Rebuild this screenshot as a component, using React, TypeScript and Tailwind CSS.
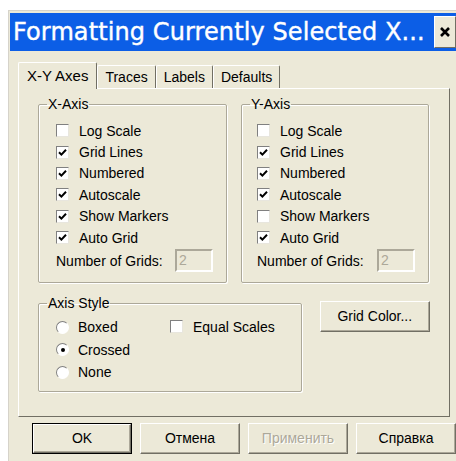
import { ReactNode } from 'react'

const font = { fontFamily: '"Liberation Sans", Arial, sans-serif' }

const CheckBox = ({ checked, label }: { checked?: boolean; label: string }) => (
  <div className="flex h-[21.4px] items-center">
    <span className="flex h-[13px] w-[13px] items-center justify-center border border-t-[#808080] border-l-[#808080] border-b-[#e8e6de] border-r-[#e8e6de] bg-white">
      {checked && (
        <svg width="9" height="9" viewBox="0 0 9 9">
          <path d="M1 4.2 L3.4 6.6 L8 1.8" fill="none" stroke="#000" strokeWidth="2" />
        </svg>
      )}
    </span>
    <span className="ml-[10px] text-[14px] leading-none text-black">{label}</span>
  </div>
)

const Radio = ({ checked, label }: { checked?: boolean; label: string }) => (
  <div className="flex h-[22.5px] items-center">
    <span className="flex h-[13px] w-[13px] items-center justify-center rounded-full border border-t-[#808080] border-l-[#808080] border-b-white border-r-white bg-white">
      {checked && <span className="h-[4px] w-[4px] rounded-full bg-black" />}
    </span>
    <span className="ml-[9px] text-[14px] leading-none text-black">{label}</span>
  </div>
)

const Group = ({ title, className, children }: { title: string; className: string; children: ReactNode }) => (
  <fieldset className={`rounded-[2px] border border-[#aca899] shadow-[inset_1px_1px_0_white,1px_1px_0_white] ${className}`}>
    <legend className="ml-[8px] px-[1px] text-[14px] leading-[16px] text-black">{title}</legend>
    {children}
  </fieldset>
)

const Button = ({ label, disabled, primary, className = '' }: { label: string; disabled?: boolean; primary?: boolean; className?: string }) => (
  <button
    className={`flex h-[31px] w-[100px] items-center justify-center bg-[#ece9d8] text-[14px] ${
      primary ? 'border border-black' : ''
    } ${className}`}
  >
    <span
      className={`flex h-full w-full items-center justify-center border border-t-white border-l-white border-b-[#716f64] border-r-[#716f64] shadow-[inset_-1px_-1px_0_#aca899] ${
        disabled ? 'text-[#aca899] [text-shadow:1px_1px_0_white]' : 'text-black'
      }`}
    >
      {label}
    </span>
  </button>
)

const GridCount = () => (
  <div className="mt-[1px] flex items-center">
    <span className="text-[14px] leading-none text-black">Number of Grids:</span>
    <span className="ml-auto flex h-[23px] w-[38px] items-center border-2 border-t-[#aca899] border-l-[#aca899] border-b-white border-r-white bg-[#ece9d8] pl-[2px] text-[14px] text-[#aca899]">
      2
    </span>
  </div>
)

const tabs = ['X-Y Axes', 'Traces', 'Labels', 'Defaults']

export default function App() {
  return (
    <div className="h-[461px] w-[456px] overflow-hidden bg-white pl-[8px] pt-[10px]" style={font}>
      <div className="h-[460px] w-[460px] border-l border-t border-[#d6d3ca] bg-[#ece9d8] pl-[1px] pt-[2px]">
        {/* title bar */}
        <div className="flex h-[38px] items-center bg-[#0c5ee6]">
          <span
            className="ml-[3px] whitespace-nowrap text-[24px] leading-none tracking-[0.1px] text-white [-webkit-text-stroke:0.4px_white]"
            style={{ fontFamily: '"DejaVu Sans", Verdana, sans-serif' }}
          >
            Formatting Currently Selected X...
          </span>
          <span className="ml-auto mr-[12px] flex h-[32px] w-[22px] items-center justify-center border border-t-white border-l-white border-b-[#716f64] border-r-[#716f64] bg-[#ece9d8]">
            <svg width="12" height="12" viewBox="0 0 12 12">
              <path d="M2 2 L10 10 M10 2 L2 10" stroke="#000" strokeWidth="2.6" />
            </svg>
          </span>
        </div>

        {/* tabs */}
        <div className="ml-[8px] mt-[11px] w-[432px]">
          <div className="flex h-[26px] items-end">
            {tabs.map((t, i) => (
              <div
                key={t}
                className={
                  i === 0
                    ? 'relative z-10 -mb-[1px] flex h-[27px] items-center rounded-t-[2px] border border-b-0 border-t-white border-l-white border-r-[#716f64] bg-[#ece9d8] px-[8px] text-[15px] text-black'
                    : 'flex h-[23px] items-center rounded-t-[2px] border border-b-0 border-t-white border-l-white border-r-[#716f64] px-[7px] text-[14px] text-black'
                }
              >
                {t}
              </div>
            ))}
          </div>

          {/* tab page */}
          <div className="h-[329px] border border-t-white border-l-white border-b-[#716f64] border-r-[#716f64] pl-[19px] pr-[19px] pt-[7px]">
            <div className="flex gap-[14px]">
              <Group title="X-Axis" className="h-[187px] w-[189px]">
                <div className="pl-[17px] pr-[13px] pt-[8px]">
                  <CheckBox label="Log Scale" />
                  <CheckBox checked label="Grid Lines" />
                  <CheckBox checked label="Numbered" />
                  <CheckBox checked label="Autoscale" />
                  <CheckBox checked label="Show Markers" />
                  <CheckBox checked label="Auto Grid" />
                  <GridCount />
                </div>
              </Group>
              <Group title="Y-Axis" className="h-[187px] w-[188px]">
                <div className="pl-[15px] pr-[13px] pt-[8px]">
                  <CheckBox label="Log Scale" />
                  <CheckBox checked label="Grid Lines" />
                  <CheckBox checked label="Numbered" />
                  <CheckBox checked label="Autoscale" />
                  <CheckBox label="Show Markers" />
                  <CheckBox checked label="Auto Grid" />
                  <GridCount />
                </div>
              </Group>
            </div>

            <div className="mt-[12px] flex items-start">
              <Group title="Axis Style" className="h-[97px] w-[265px]">
                <div className="flex pl-[17px] pt-[5px]">
                  <div className="w-[114px]">
                    <Radio label="Boxed" />
                    <Radio checked label="Crossed" />
                    <Radio label="None" />
                  </div>
                  <CheckBox label="Equal Scales" />
                </div>
              </Group>
              <Button label="Grid Color..." className="ml-[18px] mt-[6px] w-[111px]" />
            </div>
          </div>
        </div>

        {/* dialog buttons */}
        <div className="ml-[22px] mt-[6px] flex gap-[8px]">
          <Button label="OK" primary />
          <Button label="Отмена" />
          <Button label="Применить" disabled />
          <Button label="Справка" />
        </div>
      </div>
    </div>
  )
}
